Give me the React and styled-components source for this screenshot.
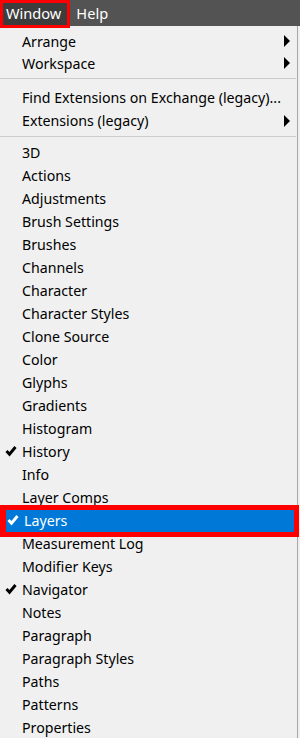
import React from "react";
import styled, { createGlobalStyle } from "styled-components";

const Global = createGlobalStyle`
  html, body { margin: 0; padding: 0; background: #f0f0f0; }
  body { font-family: "Noto Sans", "Open Sans", sans-serif; }
`;

const Page = styled.div`
  width: 300px;
  height: 738px;
  overflow: hidden;
  display: flex;
  flex-direction: column;
  background: #f0f0f0;
`;

const MenuBar = styled.div`
  height: 26px;
  background: #535353;
  display: flex;
  align-items: center;
  flex-shrink: 0;
  position: relative;
  z-index: 2;
`;

const BarItem = styled.div`
  position: relative;
  height: 26px;
  display: flex;
  align-items: center;
  padding: 0 ${(p) => (p.$active ? "9px" : "6px")} 0 6px;
  color: #ffffff;
  font-size: 14.6px;
  background: ${(p) => (p.$active ? "#3d3d3d" : "transparent")};
  &::after {
    content: "";
    display: ${(p) => (p.$marked ? "block" : "none")};
    position: absolute;
    left: 0;
    top: 0;
    right: 0;
    bottom: -2px;
    border: 3px solid #ff0000;
    pointer-events: none;
  }
`;

const Menu = styled.div`
  width: 297px;
  flex: 1;
  background: #f0f0f0;
  border-right: 1px solid #a6a6a6;
  padding-top: 4px;
  display: flex;
  flex-direction: column;
`;

const Row = styled.div`
  position: relative;
  height: ${(p) => p.$h}px;
  flex-shrink: 0;
  display: flex;
  align-items: center;
  padding: 0 7px 0 22px;
  margin: 0 ${(p) => (p.$selected ? "1px" : "0")} 0 ${(p) => (p.$selected ? "2px" : "0")};
  font-size: 14.2px;
  color: ${(p) => (p.$selected ? "#ffffff" : "#000000")};
  background: ${(p) => (p.$selected ? "#0078d7" : "transparent")};
  &::after {
    content: "";
    display: ${(p) => (p.$marked ? "block" : "none")};
    position: absolute;
    left: -2px;
    right: -3px;
    top: -4px;
    bottom: -5px;
    border: 5px solid #ff0000;
    border-left-width: 6px;
    pointer-events: none;
  }
`;

const Label = styled.span`
  flex: 1;
  white-space: nowrap;
`;

const Check = styled.svg`
  position: absolute;
  left: 5px;
  top: 50%;
  margin-top: -7px;
  width: 12px;
  height: 12px;
`;

const Arrow = styled.span`
  width: 0;
  height: 0;
  border-top: 6px solid transparent;
  border-bottom: 6px solid transparent;
  border-left: 6px solid #000000;
`;

const Separator = styled.div`
  flex-shrink: 0;
  height: 1px;
  background: #cccccc;
  margin: ${(p) => p.$above}px 1px ${(p) => p.$below}px 0;
`;

const items = [
  { t: "Arrange", sub: true, h: 22 },
  { t: "Workspace", sub: true, h: 22 },
  { sep: true, above: 4, below: 7 },
  { t: "Find Extensions on Exchange (legacy)..." },
  { t: "Extensions (legacy)", sub: true },
  { sep: true, above: 4, below: 4 },
  { t: "3D" },
  { t: "Actions" },
  { t: "Adjustments" },
  { t: "Brush Settings" },
  { t: "Brushes" },
  { t: "Channels" },
  { t: "Character" },
  { t: "Character Styles" },
  { t: "Clone Source" },
  { t: "Color" },
  { t: "Glyphs" },
  { t: "Gradients" },
  { t: "Histogram" },
  { t: "History", check: true },
  { t: "Info" },
  { t: "Layer Comps" },
  { t: "Layers", check: true, selected: true },
  { t: "Measurement Log" },
  { t: "Modifier Keys" },
  { t: "Navigator", check: true },
  { t: "Notes" },
  { t: "Paragraph" },
  { t: "Paragraph Styles" },
  { t: "Paths" },
  { t: "Patterns" },
  { t: "Properties" },
];

function CheckMark({ color }) {
  return (
    <Check viewBox="0 0 12 12">
      <path d="M1.5 6 L4.5 9.2 L10.5 2" fill="none" stroke={color} strokeWidth="2.9" strokeLinecap="butt" strokeLinejoin="miter" />
    </Check>
  );
}

export default function App() {
  return (
    <Page>
      <Global />
      <MenuBar>
        <BarItem $active $marked>Window</BarItem>
        <BarItem>Help</BarItem>
      </MenuBar>
      <Menu>
        {items.map((it, i) =>
          it.sep ? (
            <Separator key={i} $above={it.above} $below={it.below} />
          ) : (
            <Row key={i} $h={it.h || 23} $selected={it.selected} $marked={it.selected}>
              {it.check && <CheckMark color={it.selected ? "#ffffff" : "#000000"} />}
              <Label>{it.t}</Label>
              {it.sub && <Arrow />}
            </Row>
          )
        )}
      </Menu>
    </Page>
  );
}
